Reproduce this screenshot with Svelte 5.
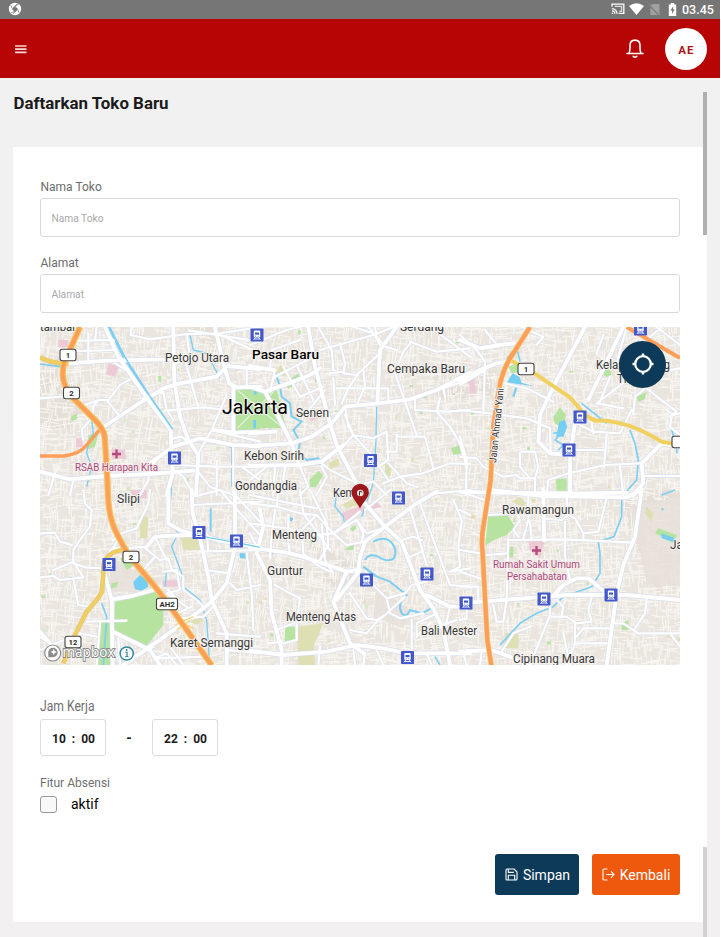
<script>
  // Street geometry is grouped in six sheets, each drawn at three units per pixel.
  const sheets = [
    {
      x: 0, y: -7,
      major: [
        'M90 130L200 122L385 118L400 116', 'M195 318L290 255L370 205L420 190L530 170L562 138L660 148',
        'M400 21L403 180L420 290L445 360L475 405L468 525', 'M525 21L550 130L568 190L590 202L660 200',
        'M580 200L580 335', 'M520 330L580 338L660 336', 'M0 455L90 478L200 468L330 462L460 452',
        'M330 430L400 380L480 355L580 375L660 378', 'M195 21L235 110L325 240L392 330L398 460L380 525'
      ],
      minor: [
        'M275 21L272 45L330 58L440 42L540 40L660 21', 'M450 32L660 65', 'M110 62L220 60L222 90L90 94', 'M145 40L145 120',
        'M225 130L260 150L320 235', 'M0 235L85 228', 'M160 260L175 240L205 240L240 195L270 178', 'M200 240L240 290',
        'M432 110L475 262', 'M375 272L490 262L560 270', 'M475 400L515 330L560 225', 'M400 435L530 440L660 440',
        'M530 425L530 525', 'M620 140L620 200', 'M160 265L155 295L125 330L130 360', 'M45 460L25 525', 'M100 480L90 525',
        'M300 525L325 480L330 440L360 410', 'M400 450L430 470L450 505', 'M530 40L660 100', 'M515 330L660 365',
        'M470 450L510 500L580 525', 'M120 260L175 240', 'M310 235L370 215L380 270L400 300', 'M580 375L580 525', 'M440 42L450 110L400 135',
        'M165 60L170 21', 'M400 355L425 350L450 370', 'M605 440L660 480'
      ]
    },
    {
      x: 210, y: -7,
      major: [
        'M175 21L195 140L240 310L260 375L325 500L340 525', 'M0 200L45 215L80 280L125 370L150 440', 'M0 138L70 150',
        'M0 340L75 335', 'M0 378L125 370L185 350L245 310L285 260L385 250L480 238L560 210L660 158',
        'M440 21L390 90L382 250', 'M45 215L130 185L180 165L210 145', 'M0 437L145 435L215 425L280 375'
      ],
      minor: [
        'M0 75L110 30L150 21', 'M210 90L370 45L430 21', 'M270 70L285 130L280 160L320 165L395 95', 'M330 155L295 205L275 250',
        'M240 160L280 155', 'M250 175L255 255', 'M260 205L415 205L415 240', 'M340 150L345 200L320 255', 'M435 160L460 230L500 345',
        'M285 285L310 345L370 355L410 335L415 420L385 440', 'M440 350L525 350L550 445', 'M410 395L440 395L440 345', 'M570 235L560 275L600 320L630 370L650 440',
        'M495 235L495 270L590 275L660 270', 'M585 230L580 205L660 178', 'M310 345L365 405L415 480', 'M400 490L450 470L520 460L600 430L660 432',
        'M415 430L470 490L500 500', 'M285 260L295 320L310 345L270 390', 'M215 430L240 450L320 490', 'M150 440L175 500L150 525',
        'M75 440L70 525', 'M0 480L50 440', 'M100 480L105 440', 'M215 440L230 470L200 525', 'M355 21L405 80L440 90', 'M480 65L560 95L660 85',
        'M485 65L460 95L435 160', 'M540 21L600 65L660 110', 'M60 150L65 90L150 60', 'M100 140L150 230', 'M140 135L190 240', 'M75 170L190 110',
        'M150 230L220 200', 'M160 290L225 210', 'M75 150L60 215', 'M205 21L245 90L250 150', 'M345 490L370 485L410 525', 'M310 21L370 40L390 75', 'M375 21L380 45'
      ]
    },
    {
      x: 420, y: -7,
      major: [
        'M0 182L60 150L110 130L155 122', 'M0 60L60 85L120 75L160 70', 'M375 21L285 190L240 285L235 365L270 400L325 405',
        'M345 310L330 405L330 525', 'M490 21L385 240', 'M660 380L605 370L545 430L550 490L520 525', 'M0 515L90 518L370 520L500 518'
      ],
      minor: [
        'M0 45L50 90L75 125L70 270', 'M75 30L115 80', 'M0 270L90 280L200 295L270 325L272 400', 'M135 190L200 205L280 245',
        'M350 310L400 335L480 340L515 270', 'M440 345L432 440', 'M350 390L435 390', 'M325 460L435 435L540 430', 'M550 468L660 468',
        'M0 410L50 415L70 440L130 470L170 465L180 475L225 475', 'M185 395L225 395L235 440L225 475L225 525', 'M180 400L180 440L205 470',
        'M260 525L265 480L325 460', 'M0 350L20 420L18 525', 'M480 110L520 135L515 170L410 250L490 265', 'M560 205L610 245L650 275L630 290',
        'M620 270L640 285L660 280', 'M610 120L550 210L525 230L520 280', 'M450 170L420 245', 'M430 45L410 100', 'M560 60L605 21',
        'M480 440L490 525', 'M605 155L660 145', 'M185 21L250 50L230 75', 'M0 195L75 150', 'M395 310L400 340', 'M470 130L500 21',
        'M590 21L660 75', 'M635 290L630 320L660 345'
      ]
    },
    {
      x: 0, y: 163,
      major: [
        'M385 0L385 100L420 120L470 135', 'M455 0L458 70L480 145L505 260L515 330L560 430L560 525', 'M585 0L585 170L560 280L515 335L430 400L330 470L250 525',
        'M195 255L215 330L218 525', 'M215 328L275 318L340 300', 'M240 175L215 180L200 210L190 250', 'M320 170L345 140L440 135L470 135',
        'M470 130L530 150L660 172', 'M218 425L330 480L360 525', 'M0 425L30 460'
      ],
      minor: [
        'M0 130L45 128L60 155L95 165', 'M130 0L135 40L155 60L150 110L120 150L100 180L100 220L135 232L190 235', 'M40 240L100 215L130 262L60 270L40 258L0 262',
        'M100 265L115 345L150 350', 'M220 150L245 130L290 115L325 40L330 0', 'M265 175L310 170L360 210L385 205L395 240L430 260L430 300L470 330L490 350',
        'M345 200L310 240', 'M370 245L410 240L420 300L380 310L440 350', 'M345 140L380 210', 'M385 300L405 320L410 370L455 350',
        'M480 185L660 180', 'M495 240L570 250', 'M500 130L505 180', 'M460 20L540 0', 'M460 45L660 35', 'M540 0L610 80L660 135', 'M590 20L660 95',
        'M530 430L660 440', 'M570 280L590 300L660 285', 'M140 395L260 392', 'M180 400L170 525', 'M0 480L120 430L170 440', 'M360 525L345 505L380 490L410 525',
        'M390 470L430 525', 'M280 500L340 470', 'M240 525L235 445', 'M620 190L635 310L640 420', 'M240 140L215 180', 'M520 350L490 380L420 385',
        'M0 440L60 480', 'M345 505L500 500', 'M560 480L660 490'
      ]
    },
    {
      x: 210, y: 163,
      major: [
        'M0 172L110 188L160 200L290 245L325 240L330 200L345 155L405 110L500 40L560 5', 'M340 35L405 110L455 155L510 300L550 355L580 420L600 525',
        'M290 245L250 335L300 460L340 490', 'M330 240L260 330', 'M20 190L60 270L65 370L95 480L95 525', 'M0 482L100 495L230 485L320 465L400 475L470 490L660 490',
        'M530 315L600 350L660 350', 'M30 60L40 110L20 190'
      ],
      minor: [
        'M0 40L80 50L150 70L200 75L250 130L290 165L345 155', 'M150 0L160 70L240 180', 'M0 100L110 115L190 135L250 130L330 65', 'M75 60L65 140L60 200',
        'M115 75L115 160L120 190', 'M160 190L155 120L200 75', 'M180 0L230 100L235 165L210 210', 'M250 130L320 90L350 130L400 115',
        'M320 90L340 130L335 155', 'M480 55L530 225', 'M510 40L600 285L660 290', 'M560 10L660 0', 'M610 30L635 90L625 170L630 230L600 245',
        'M455 150L490 140L515 150', 'M480 200L515 185', 'M300 310L320 340L350 385L380 390L405 375L465 320', 'M350 250L370 285L410 325L420 370L450 385L520 370',
        'M410 325L465 310L485 285L530 275', 'M300 420L350 430L375 400L405 375', 'M75 285L120 310L150 325L140 400L140 450L100 460',
        'M80 420L130 400', 'M55 460L95 455', 'M0 130L20 170', 'M160 190L200 225L240 245', 'M485 390L485 480', 'M560 370L500 400L500 440L540 400',
        'M600 350L580 440', 'M560 410L620 390', 'M590 430L620 430L660 440', 'M210 470L205 525', 'M310 480L315 525', 'M345 490L340 525', 'M380 480L400 525',
        'M530 490L545 525', 'M420 0L345 60', 'M0 15L200 55', 'M85 0L80 50', 'M215 105L225 210L250 250', 'M640 490L650 525', 'M600 245L660 235'
      ]
    },
    {
      x: 420, y: 163,
      major: [
        'M90 0L250 18L500 22L545 0', 'M545 0L525 140L490 225L470 310L440 525', 'M0 340L190 325L320 315L500 315L660 330', 'M250 0L252 150',
        'M280 318L310 285L350 265L385 265L430 302', 'M0 485L95 480L150 500L200 525'
      ],
      minor: [
        'M0 5L90 35', 'M0 60L30 75', 'M150 150L310 148L400 152L520 158', 'M145 150L140 325', 'M315 95L315 200L330 270', 'M250 85L305 90L325 75L345 85L370 130L415 125L440 25',
        'M370 130L370 150', 'M190 145L205 90L205 20', 'M85 75L170 70L180 90L160 120L175 140', 'M320 20L325 75', 'M80 195L140 190', 'M0 290L55 290L55 335L0 340',
        'M270 325L270 375L210 525', 'M270 380L320 380L350 400L395 395L385 360L395 320', 'M345 395L345 460L440 460', 'M350 440L370 415L450 415',
        'M455 400L490 400L535 430L660 430', 'M560 330L555 370L525 415', 'M310 430L330 525', 'M345 460L320 525', 'M100 345L110 395L130 395L140 330',
        'M300 290L270 325', 'M290 330L310 350L305 375', 'M20 345L20 385L0 390', 'M0 245L75 270', 'M0 180L60 190', 'M210 95L215 150', 'M0 435L50 430',
        'M65 480L60 525', 'M125 485L160 430L210 410', 'M630 430L660 470'
      ]
    }
  ];

  const parks = [
    'M588 206H660V330H588Z', 'M640 206H710L725 270L738 325H640Z', 'M145 345L175 340L165 380L142 388Z', 'M92 290L112 280L110 298L96 304Z',
    'M735 190L775 160L785 180L745 206Z', 'M808 480L835 453L850 465L828 502L810 502Z', 'M225 845L340 812L370 840L370 915L310 990L222 930Z',
    'M175 900H215V1035H168Z', 'M355 168H364V185H355Z', 'M1233 385L1260 375L1265 400L1240 405Z', 'M735 920H765V965H735Z',
    'M1345 585L1400 582L1425 620L1400 645L1362 660L1336 676Z', 'M1540 290L1560 262L1578 285L1568 320L1545 312Z', 'M1548 478L1580 475V525H1550Z',
    'M1790 230L1820 215L1815 238L1795 245Z', 'M1680 160L1708 145L1715 165L1700 170Z', 'M1855 625L1910 645L1900 670L1845 640Z',
    'M920 685L945 665L940 690L915 690Z', 'M215 790L235 785L230 800L210 808Z', 'M1405 140L1430 130L1438 155L1415 160Z',
    'M1405 680H1420V712H1405Z', 'M1745 910L1765 900V930H1745Z', 'M930 625L945 615L950 625L936 635Z', 'M240 715L260 710L285 735L260 750Z', 'M640 65L650 60V75Z'
  ];
  const sand = [
    'M720 135L745 145L735 170L710 160Z', 'M298 590L325 590L322 655H300Z', 'M420 650H480V690H430Z', 'M865 430L895 415L900 435L870 447Z',
    'M1035 430L1058 435L1050 470H1035Z', 'M770 920L850 910L820 980L825 1035L775 1035Z', 'M905 555L950 530L955 555L920 565Z', 'M1415 545L1440 530L1460 550L1450 560Z',
    'M1395 940H1435V985H1395Z', 'M450 905L475 890L490 900L470 915Z', 'M1820 560L1840 580L1835 605L1815 580Z'
  ];
  const pink = [
    'M205 130L238 137L225 170L197 162Z', 'M55 60H85V82H55Z', 'M108 355H128V382H108Z', 'M215 385L255 390L258 418L215 415Z', 'M905 580L950 560L1010 545L1025 560L950 580L920 610Z',
    'M365 782L420 780V800H370Z', 'M1465 662H1515L1500 715L1468 690Z', 'M270 510H320V535H280Z', 'M1285 180L1300 175L1310 220H1292Z', 'M800 275L825 270L835 290L815 305Z'
  ];
  const water = [
    'M1400 188L1418 160L1438 170L1445 188L1480 198Z', 'M1548 350L1558 305L1575 300L1582 320L1570 350Z', 'M280 785L300 765L320 780L325 800L305 812L285 808Z',
    'M690 200L715 195L708 210L690 210Z', 'M598 700H620V715H600Z', 'M640 300H648V325H640Z', 'M642 212H650V224H642Z', 'M745 588L760 595L755 605L742 598Z',
    'M1865 640L1905 655L1900 665L1865 655Z'
  ];
  const streams = [
    [6, 'M205 21L250 110L330 235L395 330L400 430L385 600L395 610'], [4, 'M395 610L415 640L395 680L425 760L430 800L480 840L500 900L508 1020'],
    [7, 'M388 510V590'], [4, 'M155 300L160 340L145 370L140 400L155 440L140 500'], [5, 'M185 850L200 890L190 1035'], [4, 'M380 750L375 800'],
    [4, 'M450 45L460 90L500 100L540 175'], [6, 'M705 155L720 200L725 230L750 250L755 290L785 305L760 330L780 365L775 400L800 420L835 415L840 435'],
    [4, 'M1010 260L1008 360L1000 490L965 590'], [6, 'M1000 665Q1025 650 1045 660Q1075 680 1062 715Q1045 730 1010 708Q985 700 975 720'],
    [6, 'M970 740L1010 770L1050 785L1100 825Q1070 850 1085 880Q1100 895 1110 870L1145 880L1165 870L1180 860'],
    [4, 'M890 510L885 560L910 590L915 620'], [5, 'M1905 510L1865 525'], [5, 'M1865 565L1870 570'], [5, 'M1400 115L1430 80L1440 125'],
    [5, 'M1895 330L1910 380L1910 400'], [5, 'M1770 330L1785 370L1795 420L1790 480L1745 530L1745 590L1722 650L1675 665L1680 700L1680 760L1655 800L1570 830L1540 860L1490 880L1440 910L1380 975'],
    [5, 'M1540 340L1570 335L1545 360L1570 375L1555 390'], [5, 'M1625 250L1675 290L1700 310'],
    [6, 'M470 650L570 670L660 685L700 700'], [6, 'M512 565V635'], [5, 'M0 132L60 140'], [4, 'M555 365L575 385L575 500'], [7, 'M1430 200L1420 230'], [5, 'M1185 1010L1200 1035']
  ];

  // Fine neighbourhood lanes, laid out in small blocks with varying grain.
  let seed = 48271;
  const rnd = () => (seed = (seed * 16807) % 2147483647) / 2147483647;
  let lanes = '';
  for (let gy = -20; gy < 1050; gy += 60) {
    for (let gx = -20; gx < 1960; gx += 60) {
      const a = (rnd() - 0.5) * 0.45, c = Math.cos(a), s = Math.sin(a);
      for (let k = 0; k < 16; k++) {
        const px = gx + rnd() * 60, py = gy + rnd() * 60, l = 14 + rnd() * 38;
        const h = rnd() > 0.5;
        const dx = h ? c * l : -s * l, dy = h ? s * l : c * l;
        lanes += `M${px.toFixed(0)} ${py.toFixed(0)}l${dx.toFixed(0)} ${dy.toFixed(0)}`;
      }
    }
  }
  const specks = Array.from({ length: 130 }, () => ({
    x: rnd() * 1920, y: rnd() * 1014, w: 4 + rnd() * 8, h: 4 + rnd() * 8, c: ['#b8e2a2', '#e2dcb4', '#e6dfc2', '#d8e9c9'][Math.floor(rnd() * 4)]
  }));

  // label: text, left edge, baseline, width, size
  const places = [
    ['tambar', 0, 4, 36, 12], ['Petojo Utara', 125, 35, 64, 12], ['Cempaka Baru', 347, 46, 78, 12], ['Serdang', 360, 4, 44, 12],
    ['Senen', 256, 90, 33, 12], ['Kebon Sirih', 204, 133, 60, 12], ['Gondangdia', 195, 163, 62, 12], ['Slipi', 77, 176, 23, 12],
    ['Menteng', 232, 212, 45, 12], ['Guntur', 227, 248, 36, 12], ['Menteng Atas', 246, 294, 70, 12], ['Karet Semanggi', 130, 320, 83, 12],
    ['Bali Mester', 381, 308, 56, 12], ['Rawamangun', 462, 187, 72, 12], ['Cipinang Muara', 473, 336, 82, 12], ['Kemur', 293, 170, 32, 12],
    ['Kelapa Gading', 556, 42, 74, 12], ['Timur', 577, 56, 30, 12], ['Jatinegara', 630, 222, 55, 12]
  ];
  const stations = [[217, 8], [134.5, 131], [330.5, 133.5], [358.5, 171], [540, 90], [529, 123], [159, 205.5], [196.5, 214], [69, 237.5], [326.5, 253], [387, 247], [426, 276], [504, 272], [571, 268], [367.5, 330.5], [600.5, 2]];
  const shields = [['1', 28, 28, 16], ['2', 31.5, 66, 16], ['1', 486, 42, 16], ['2', 91, 230, 16], ['12', 33, 315, 16], ['AH2', 127, 277, 21], ['', 640, 115, 16]];
  const highway = 'M120 21L87 95Q68 125 68 165Q72 205 100 235L165 300Q190 325 194 350L202 480L204 530Q207 600 235 650L265 705L345 800L380 845L430 915L515 1036';
  const eastway = 'M1470 21L1425 92Q1385 145 1375 220L1360 320L1352 480L1330 620Q1323 660 1328 700L1336 850L1342 960L1354 1036';

  let store = $state('');
  let address = $state('');
  let active = $state(false);
</script>

<div class="screen">
  <div class="status">
    <svg class="shutter" width="14" height="14" viewBox="0 0 14 14"><circle cx="7" cy="7" r="6.2" fill="#fff" /><path d="M7 4.7L9 5.9V8.2L7 9.4L5 8.2V5.9Z" fill="#767676" /><path d="M7 4.7L10.8 2M9 5.9L11 10.8M9 8.2L4.8 11.8M7 9.4L2.8 11M5 8.2L2.8 3.5M5 5.9L9.5 1.5" stroke="#767676" stroke-width=".8" /></svg>
    <div class="signals">
      <svg width="14" height="12" viewBox="0 0 15 13" fill="none" stroke="#fff" stroke-width="1.4"><path d="M1 4V1.2H13.8V11.3H8.2" /><path d="M1 6.1A5.4 5.4 0 0 1 6.4 11.6M1 8.5A3.2 3.2 0 0 1 4.1 11.6" /><path d="M4 3.7H11.3V9H9" opacity=".75" /><circle cx="1.5" cy="11.2" r=".8" fill="#fff" stroke="none" /></svg>
      <svg width="15" height="12" viewBox="0 0 15 12"><path d="M0 3Q7.500-2.500 15 3L7.500 12Z" fill="#fff" /></svg>
      <svg width="12" height="13" viewBox="0 0 12 13"><path d="M3.500 1H10.500V11L2 2.500ZM1.400 4.200L8.800 12H1.400Z" fill="#a0a0a0" /><path d="M.6 1.300L10.900 12.200" stroke="#a0a0a0" /></svg>
      <svg width="9" height="13" viewBox="0 0 9 13"><path d="M.8 1.500H2.800V0H6.200V1.500H8.200V13H.8Z" fill="#fff" /><path d="M5.200 3.200L2.400 7.500H4.100V10.800L6.700 6.400H5.200Z" fill="#767676" /></svg>
      <span class="clock">03.45</span>
    </div>
  </div>

  <header>
    <svg class="menu" width="12" height="9" viewBox="0 0 12 9"><path d="M0 1H11.500M0 4.200H11.500M0 7.400H11.500" stroke="#fff" stroke-width="1.700" opacity=".85" /></svg>
    <div class="account">
      <svg width="18" height="20" viewBox="0 0 18 20" fill="none" stroke="#fff" stroke-width="1.600" stroke-linejoin="round" stroke-linecap="round"><path d="M1 14.500H17M3 14.300Q4 12 4 9V6.500C4 3.200 6 1.100 9 1.100S14 3.200 14 6.500V9Q14 12 15 14.300" /><path d="M7.200 17.300Q9 19.300 10.800 17.300" /></svg>
      <div class="avatar">AE</div>
    </div>
  </header>

  <main>
    <h1>Daftarkan Toko Baru</h1>
    <section class="card">
      <label class="field"><span>Nama Toko</span><input placeholder="Nama Toko" bind:value={store} /></label>
      <label class="field second"><span>Alamat</span><input placeholder="Alamat" bind:value={address} /></label>

      <div class="map">
        <svg width="640" height="338" viewBox="0 0 640 338">
          <rect width="640" height="338" fill="#ebe5df" />
          <g transform="translate(0 -7) scale(.33333)">
            <path d="M60 120L130 270L90 330L0 320V130ZM430 20L550 20L540 110ZM800 660L970 745L900 815L860 780ZM210 720L360 780L290 815H210ZM1010 800L1110 870L1090 925L1000 890ZM1720 510H1920V820L1850 810ZM1180 170L1370 150L1350 230L1180 240Z" fill="#e6dfd7" />
            <path d={lanes} stroke="#f8f6f2" stroke-width="3" fill="none" />
            {#each specks as s}<rect x={s.x} y={s.y} width={s.w} height={s.h} fill={s.c} />{/each}
            <path d="M210 720L360 780L290 815H210ZM1010 800L1110 870L1090 925L1000 890ZM1770 560L1920 530V800L1820 790Z" fill="#e8e1da" opacity=".85" />
            <path d={parks.join('')} fill="#b6e3a0" />
            <path d={sand.join('')} fill="#dedfb2" />
            <path d={pink.join('')} fill="#eccbd6" />
            <path d={water.join('')} fill="#74cdf2" />
            {#each streams as [w, d]}<path {d} stroke="#7ccff2" stroke-width={w} fill="none" stroke-linejoin="round" />{/each}
            <path d="M592 210L730 325M592 325L705 210" stroke="#e0f1d4" stroke-width="4" />
          </g>
          {#each sheets as t}
            <g transform="translate({t.x} {t.y}) scale(.33333)" fill="none" stroke="#dadfee" stroke-linejoin="round">
              <path d={t.minor.join('')} stroke-width="10" /><path d={t.major.join('')} stroke-width="16" />
            </g>
          {/each}
          {#each sheets as t}
            <g transform="translate({t.x} {t.y}) scale(.33333)" fill="none" stroke="#fff" stroke-linejoin="round" stroke-linecap="round">
              <path d={t.minor.join('')} stroke-width="6.500" /><path d={t.major.join('')} stroke-width="11.500" />
            </g>
          {/each}
          <g transform="translate(0 -7) scale(.33333)" fill="none" stroke-linejoin="round">
            <path d="M209 21L254 110L332 232L398 328" stroke="#7ccff2" stroke-width="5" />
            <path d="M470 646L570 664L660 682" stroke="#7ccff2" stroke-width="4" />
            <path d="M0 112Q35 130 85 132M265 688Q185 690 190 760L186 815Q180 830 140 875L105 945L70 1030" stroke="#dfc878" stroke-width="14" />
            <path d="M0 112Q35 130 85 132M265 688Q185 690 190 760L186 815Q180 830 140 875L105 945L70 1030" stroke="#f1ce61" stroke-width="10" />
            <path d="M1415 122L1480 158L1590 232L1635 285L1665 302Q1730 300 1800 330Q1850 355 1865 365L1920 374" stroke="#f0d05f" stroke-width="12" />
            <path d="M0 408H72Q120 402 140 375L180 328" stroke="#ff9e58" stroke-width="10" />
            <path d="M405 915L460 890M410 900L460 925M410 930L450 900" stroke="#f6d77d" stroke-width="4" />
            <path d={highway} stroke="#efc75c" stroke-width="19" /><path d={highway} stroke="#ff9e58" stroke-width="12" />
            <path d={eastway} stroke="#efd27c" stroke-width="16" /><path d={eastway} stroke="#ff9e58" stroke-width="12.500" />
            <path d="M1760 21L1920 114" stroke="#ff9e58" stroke-width="12" />
          </g>
          <g class="names">
            {#each places as [name, x, y, w, size]}<text {x} {y} font-size={size} textLength={w} lengthAdjust="spacingAndGlyphs">{name}</text>{/each}
            <text x="212" y="32" font-size="13" font-weight="500" fill="#000" textLength="67" lengthAdjust="spacingAndGlyphs">Pasar Baru</text>
            <text class="city" x="182" y="87" font-size="20" textLength="66" lengthAdjust="spacingAndGlyphs">Jakarta</text>
            <text transform="translate(456 136) rotate(-84)" font-size="10" textLength="75" lengthAdjust="spacingAndGlyphs">Jalan Ahmad Yani</text>
            <g fill="#a94b75" stroke="#f7edf0" font-size="10.5">
              <text x="35" y="144" textLength="83" lengthAdjust="spacingAndGlyphs">RSAB Harapan Kita</text>
              <text x="453" y="241" textLength="87" lengthAdjust="spacingAndGlyphs">Rumah Sakit Umum</text>
              <text x="467" y="253" textLength="60" lengthAdjust="spacingAndGlyphs">Persahabatan</text>
            </g>
          </g>
          <path d="M72 127H81M76.500 122.500V131.500M492 223.500H501M496.500 219V228" stroke="#b34c7c" stroke-width="2.300" />
          {#each stations as [x, y]}
            <g transform="translate({x} {y})"><rect x="-6.500" y="-6.500" width="13" height="13" rx=".7" fill="#4358ca" /><rect x="-3.200" y="-4.500" width="6.400" height="7" rx="1" fill="#fff" /><path d="M-2-2.500H2V-.3H-2Z" fill="#4358ca" /><path d="M-1.800 2.500L-3.300 4.800M1.800 2.500L3.300 4.800M-2.800 4H2.800" stroke="#fff" stroke-width=".9" /><path d="M-1.800 1.200H-.8M.8 1.200H1.800" stroke="#4358ca" stroke-width=".7" /></g>
          {/each}
          {#each shields as [n, x, y, w]}
            <rect x={x - w / 2} y={y - 5.7} width={w} height="11.400" rx="2.200" fill="#fff" stroke="#45433f" stroke-width="1.100" />
            {#if n}<text class="route" {x} y={y + 2.8} text-anchor="middle">{n}</text>{/if}
          {/each}
          <path d="M320 181.500C316 174 311.500 170.500 311.500 165.500A8.700 8.700 0 0 1 328.900 165.500C328.900 170.500 324 174 320 181.500Z" fill="#9b181d" />
          <circle cx="320.300" cy="166" r="3.300" fill="#f3e3e1" /><path d="M319.500 168.500V164.500Q322 163.600 322 165.700" stroke="#333" stroke-width="1" fill="none" />
          <g stroke="#8b8b8b" fill="#fff"><circle cx="12.700" cy="326" r="8" stroke-width="1.200" /><path d="M8.300 330.200V325.500A4.700 4.700 0 1 1 13 330.200Z" fill="#8b8b8b" stroke="none" /><path d="M13.700 321.800L14.700 324L17 325L14.700 326L13.700 328.200L12.700 326L10.400 325L12.700 324Z" stroke="none" /></g>
          <text class="brand" x="22.500" y="330" textLength="52" lengthAdjust="spacingAndGlyphs">mapbox</text>
          <circle cx="86.700" cy="326.500" r="6.600" fill="#ffffffb0" stroke="#35889f" stroke-width="1.500" /><path d="M85.500 325.300H87V329.500M85.300 329.500H88.500" stroke="#35889f" stroke-width="1.200" fill="none" /><circle cx="86.700" cy="323" r=".9" fill="#35889f" />
        </svg>
        <button class="locate" aria-label="Lokasi saya"><svg width="24" height="24" viewBox="0 0 24 24" fill="none" stroke="#fff"><circle cx="12" cy="12" r="7.800" stroke-width="2.300" /><path d="M12 1.500V5M12 19V22.500M1.500 12H5M19 12H22.500" stroke-width="2.500" /></svg></button>
      </div>

      <div class="hours-title"><span>Jam Kerja</span></div>
      <div class="hours"><div class="time"><b>10</b><b>:</b><b>00</b></div><b class="dash">-</b><div class="time"><b>22</b><b>:</b><b>00</b></div></div>
      <div class="feature">Fitur Absensi</div>
      <label class="check"><input type="checkbox" bind:checked={active} /><span>aktif</span></label>

      <div class="actions">
        <button class="save"><svg width="13" height="13" viewBox="0 0 13 13" fill="none" stroke="#fff" stroke-width="1.100" stroke-linejoin="round"><path d="M1 2Q1 1 2 1H9L12 4V11Q12 12 11 12H2Q1 12 1 11Z" /><path d="M3.300 1V4.400H8.800M3.300 12V7.200H9.700V12" /></svg><span>Simpan</span></button>
        <button class="back"><svg width="13" height="13" viewBox="0 0 13 13" fill="none" stroke="#fff" stroke-width="1.100" stroke-linecap="round" stroke-linejoin="round"><path d="M5 1H2Q1 1 1 2V11Q1 12 2 12H5M4.500 6.500H12M9.300 3.700L12 6.500L9.300 9.300" /></svg><span>Kembali</span></button>
      </div>
    </section>
  </main>
  <i class="bar top"></i><i class="bar low"></i>
</div>

<style>
  :global(body) { background: #fff; overflow: hidden; }
  * { box-sizing: border-box; }
  .screen { position: relative; width: 720px; height: 937px; overflow: hidden; font-family: Roboto, "Liberation Sans", sans-serif; background: linear-gradient(#f1f1f1 0 350px, #f3f0f2 560px); color: #1b1b1b; }
  .status { height: 19px; background: #767676; display: flex; align-items: center; justify-content: space-between; padding: 0 7px 0 8px; }
  .shutter { margin-top: -1px; }
  .signals { display: flex; align-items: center; gap: 5px; color: #fff; }
  .signals svg { margin-top: -1px; }
  .signals svg:nth-child(2) { margin-left: -1px; }
  .signals svg:nth-child(4) { margin-left: 2px; }
  .clock { font-size: 12.5px; font-weight: 500; width: 31px; line-height: 19px; white-space: nowrap; }
  header { height: 59px; background: #b70404; display: flex; justify-content: space-between; align-items: center; padding: 0 13.5px 0 14.5px; }
  .menu { margin-top: 1px; }
  .account { display: flex; align-items: center; gap: 21px; }
  .avatar { width: 42px; height: 42px; border-radius: 50%; background: #fff; display: flex; align-items: center; justify-content: center; color: #ae1414; font-weight: 700; font-size: 11.5px; letter-spacing: 1.2px; padding: 2px 0 0 2px; }
  main { padding: 14px 13px 0; }
  h1 { margin: 0 0 0 .5px; padding-top: 1px; font-size: 16.9px; line-height: 20px; font-weight: 700; height: 55px; }
  .card { background: #fff; height: 775px; padding: 32px 27px 0; display: flex; flex-direction: column; }
  .field { display: flex; flex-direction: column; font-size: 12px; color: #6c6c6c; line-height: 16px; gap: 3px; }
  .field span { padding-left: .5px; }
  .field.second { margin-top: 18px; }
  .field input { width: 100%; height: 39px; border: 1px solid #d9d9d9; border-radius: 3px; padding: 1px 10.5px 0; font: 10.2px Roboto, sans-serif; outline: none; }
  .field input::placeholder { color: #a8a8a8; }
  .map { position: relative; margin-top: 14px; height: 338px; overflow: hidden; }
  .map > svg { display: block; }
  .names { font-family: Roboto, sans-serif; fill: #373737; stroke: #f6f3f0; stroke-width: 1.8px; paint-order: stroke; stroke-linejoin: round; }
  .city { fill: #000; font-weight: 400; }
  .route { font: 700 7.8px Roboto, sans-serif; fill: #2d2d2d; }
  .brand { font: 500 15px "Open Sans", Roboto, sans-serif; fill: #fff; stroke: #8b8b8b; stroke-width: 2px; paint-order: stroke; }
  .locate { position: absolute; right: 14px; top: 13.5px; width: 47px; height: 47px; border: 0; border-radius: 50%; padding: 0; background: #0d3a59; display: grid; place-items: center; }
  .hours-title { margin-top: 33px; height: 21px; line-height: 17px; font-size: 13.8px; color: #6f6f6f; }
  .hours-title span { display: inline-block; transform: scaleX(.88); transform-origin: left; }
  .hours { display: flex; align-items: center; height: 37px; }
  .time { width: 66px; height: 37px; border: 1px solid #dcdcdc; border-radius: 3px; display: flex; align-items: center; justify-content: space-between; padding: 2px 10px 0 11px; font-size: 12px; }
  .dash { width: 46px; text-align: center; font-size: 14px; }
  .feature { margin-top: 19px; line-height: 16px; font-size: 12px; color: #707070; }
  .check { display: flex; align-items: center; gap: 14px; margin-top: 4px; height: 18px; font-size: 14px; color: #000; }
  .check input { appearance: none; margin: 0; width: 17px; height: 17px; border: 1.8px solid #999; border-radius: 3px; background: #faf7f8; }
  .actions { margin-top: 41px; display: flex; justify-content: flex-end; gap: 13px; }
  .actions button { height: 41px; border: 0; border-radius: 3px; color: #fff; font: 14px Roboto, sans-serif; display: flex; align-items: center; justify-content: center; gap: 5px; padding: 0; }
  .actions .save { width: 84px; background: #0d3a59; padding-left: 1px; }
  .actions .back { width: 88px; background: #ee590e; }
  .actions span { padding-top: 1px; }
  .bar { position: absolute; left: 703px; width: 4px; background: #b0b0b0; }
  .bar.top { top: 92px; height: 143px; }
  .bar.low { top: 847px; height: 90px; background: #d2d2d2; }
</style>
